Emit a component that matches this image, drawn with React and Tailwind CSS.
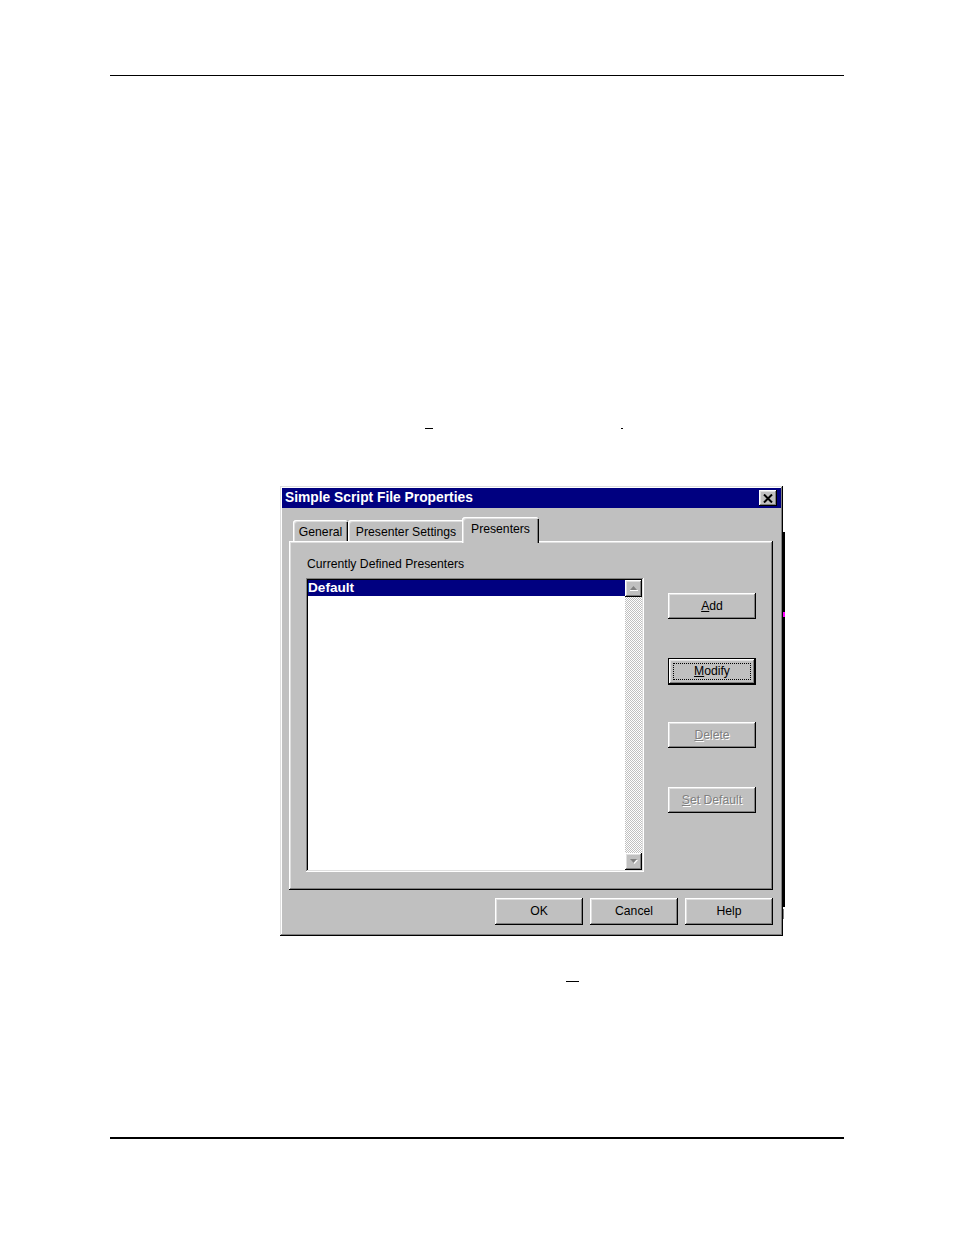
import React from "react";

const raised =
  "shadow-[inset_-1px_-1px_#000,inset_1px_1px_#fff,inset_-2px_-2px_#808080,inset_2px_2px_#dfdfdf]";
const sunken =
  "shadow-[inset_-1px_-1px_#fff,inset_1px_1px_#808080,inset_-2px_-2px_#dfdfdf,inset_2px_2px_#000]";

function Btn({ children, disabled, isDefault, h = "h-[26px]", extra = "" }) {
  if (isDefault) {
    return (
      <div className={`w-[88px] ${h} border border-black ${extra}`}>
        <div className={`w-full h-full bg-[#c0c0c0] ${raised} flex items-center justify-center p-[4px]`}>
          <div className="w-full h-full border border-dotted border-black flex items-center justify-center text-black leading-none">
            {children}
          </div>
        </div>
      </div>
    );
  }
  return (
    <div
      className={`w-[88px] ${h} bg-[#c0c0c0] ${raised} flex items-center justify-center leading-none ${
        disabled ? "text-[#808080] [text-shadow:1px_1px_0_#fff]" : "text-black"
      } ${extra}`}
    >
      {children}
    </div>
  );
}

function Arrow({ down }) {
  return (
    <div className={`w-[17px] h-[17px] bg-[#c0c0c0] ${raised} flex items-center justify-center`}>
      <svg width="10" height="7" viewBox="0 0 10 7">
        {down ? (
          <>
            <path d="M2 2 H9 L5.5 6 Z" fill="#fff" />
            <path d="M1 1 H8 L4.5 5 Z" fill="#808080" />
          </>
        ) : (
          <>
            <path d="M4.5 1 L8 5 H1 Z" fill="#808080" />
            <rect x="1" y="5" width="8" height="1" fill="#fff" />
          </>
        )}
      </svg>
    </div>
  );
}

function Tab({ children, selected, w }) {
  if (selected) {
    return (
      <div
        className={`${w} h-[26px] -mb-[2px] -ml-[2px] relative z-10 bg-[#c0c0c0] rounded-t-[3px] shadow-[inset_1px_1px_#fff,inset_2px_2px_#dfdfdf,inset_-1px_0_#000,inset_-2px_0_#808080] flex justify-center pt-[6px] leading-none`}
      >
        {children}
      </div>
    );
  }
  return (
    <div
      className={`${w} h-[21px] bg-[#c0c0c0] rounded-t-[3px] shadow-[inset_1px_1px_#fff,inset_2px_2px_#dfdfdf,inset_-1px_0_#000,inset_-2px_0_#808080] flex justify-center items-center pt-[3px] leading-none`}
    >
      {children}
    </div>
  );
}

export default function App() {
  return (
    <div className="w-[954px] h-[1235px] bg-white flex flex-col font-['Liberation_Sans',Arial,sans-serif] text-[12.2px] text-black">
      {/* top rule */}
      <div className="ml-[110px] mt-[75px] w-[734px] h-px bg-black" />

      {/* small marks */}
      <div className="mt-[352px] h-px flex">
        <div className="ml-[425px] w-[8px] h-px bg-black" />
        <div className="ml-[188px] w-[2px] h-px bg-black" />
      </div>

      {/* dialog row */}
      <div className="mt-[57px] ml-[280px] flex items-start">
        <div className="w-[503px] h-[450px] bg-[#c0c0c0] p-[2px] shadow-[inset_-1px_-1px_#000,inset_1px_1px_#dfdfdf,inset_-2px_-2px_#808080,inset_2px_2px_#fff] flex flex-col">
          {/* title bar */}
          <div className="h-[20px] bg-[#000080] flex items-center justify-between pl-[3px] pr-[4px]">
            <span className="text-white font-bold text-[13.8px] leading-none">Simple Script File Properties</span>
            <div className={`w-[18px] h-[16px] bg-[#c0c0c0] ${raised} flex items-center justify-center`}>
              <svg width="10" height="9" viewBox="0 0 10 9">
                <path d="M1 0.5 L9 8.5 M9 0.5 L1 8.5" stroke="#000" strokeWidth="2" />
              </svg>
            </div>
          </div>

          {/* tabs */}
          <div className="mt-[9px] ml-[11px] h-[24px] flex items-end">
            <Tab w="w-[55px]">General</Tab>
            <Tab w="w-[116px]">Presenter Settings</Tab>
            <Tab w="w-[77px]" selected>
              Presenters
            </Tab>
          </div>

          {/* panel */}
          <div className={`ml-[7px] w-[484px] h-[349px] bg-[#c0c0c0] ${raised} flex pl-[17px] pt-[16px]`}>
            <div className="flex flex-col">
              <div className="h-[15px] leading-[15px] pl-[1px]">Currently Defined Presenters</div>
              <div className={`mt-[6px] w-[338px] h-[294px] bg-white ${sunken} p-[2px] flex`}>
                <div className="flex-1 flex flex-col">
                  <div className="h-[16px] bg-[#000080] text-white font-bold text-[13.6px] leading-[16px]">Default</div>
                </div>
                <div className="w-[17px] flex flex-col bg-[repeating-conic-gradient(#c0c0c0_0%_25%,#fff_0%_50%)] bg-[length:2px_2px]">
                  <Arrow />
                  <div className="flex-1" />
                  <Arrow down />
                </div>
              </div>
            </div>
            <div className="ml-[24px] flex flex-col">
              <Btn extra="mt-[36px]">
                <span>
                  <span className="underline">A</span>dd
                </span>
              </Btn>
              <Btn isDefault h="h-[27px]" extra="mt-[39px]">
                <span>
                  <span className="underline">M</span>odify
                </span>
              </Btn>
              <Btn disabled extra="mt-[37px]">
                <span>
                  <span className="underline">D</span>elete
                </span>
              </Btn>
              <Btn disabled extra="mt-[39px]">
                <span>
                  <span className="underline">S</span>et Default
                </span>
              </Btn>
            </div>
          </div>

          {/* bottom buttons */}
          <div className="mt-[8px] flex justify-end gap-[7px] pr-[8px]">
            <Btn h="h-[27px]">OK</Btn>
            <Btn h="h-[27px]">Cancel</Btn>
            <Btn h="h-[27px]">Help</Btn>
          </div>
        </div>

        {/* stray edge line */}
        <div className="mt-[46px] w-[2px] flex flex-col">
          <div className="h-[80px] bg-black" />
          <div className="h-[5px] bg-[#ff00ff]" />
          <div className="h-[290px] bg-black" />
          <div className="mt-[2px] h-[10px] w-[1px] bg-[#808080]" />
        </div>
      </div>

      {/* small mark below */}
      <div className="mt-[45px] ml-[566px] w-[13px] h-px bg-black" />

      {/* bottom rule */}
      <div className="mt-[155px] ml-[110px] w-[734px] h-[2px] bg-black" />
    </div>
  );
}
